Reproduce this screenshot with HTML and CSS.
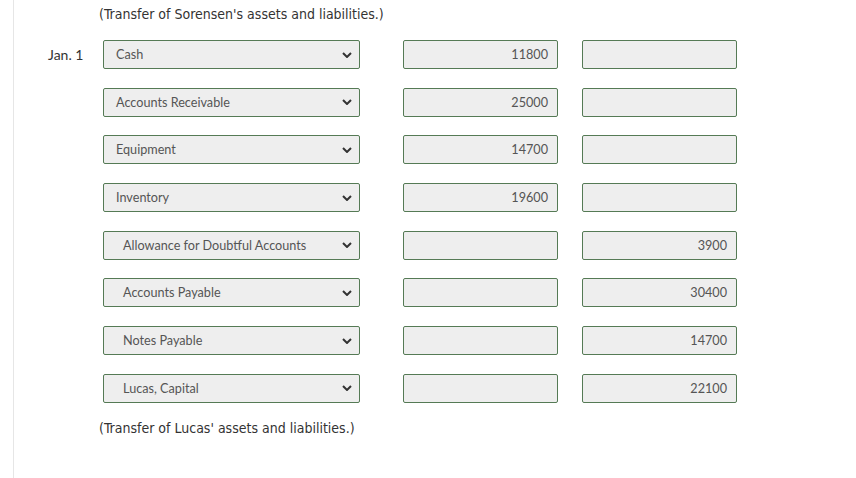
FILE: index.html
```html
<!DOCTYPE html>
<html>
<head>
<meta charset="utf-8">
<link rel="stylesheet" href="styles.css">
</head>
<body>
<div class="page">
  <p class="note note-top">(Transfer of Sorensen's assets and liabilities.)</p>
  <div class="rows">
    <div class="row">
      <div class="date">Jan. 1</div>
      <div class="sel"><span class="opt">Cash</span><svg class="chev" viewBox="0 0 10 6" width="10" height="6"><path d="M1 1 L5 5 L9 1" fill="none" stroke="#333" stroke-width="2"/></svg></div>
      <div class="amt">11800</div>
      <div class="amt"></div>
    </div>
    <div class="row">
      <div class="date"></div>
      <div class="sel"><span class="opt">Accounts Receivable</span><svg class="chev" viewBox="0 0 10 6" width="10" height="6"><path d="M1 1 L5 5 L9 1" fill="none" stroke="#333" stroke-width="2"/></svg></div>
      <div class="amt">25000</div>
      <div class="amt"></div>
    </div>
    <div class="row">
      <div class="date"></div>
      <div class="sel"><span class="opt">Equipment</span><svg class="chev" viewBox="0 0 10 6" width="10" height="6"><path d="M1 1 L5 5 L9 1" fill="none" stroke="#333" stroke-width="2"/></svg></div>
      <div class="amt">14700</div>
      <div class="amt"></div>
    </div>
    <div class="row">
      <div class="date"></div>
      <div class="sel"><span class="opt">Inventory</span><svg class="chev" viewBox="0 0 10 6" width="10" height="6"><path d="M1 1 L5 5 L9 1" fill="none" stroke="#333" stroke-width="2"/></svg></div>
      <div class="amt">19600</div>
      <div class="amt"></div>
    </div>
    <div class="row">
      <div class="date"></div>
      <div class="sel"><span class="opt indent">Allowance for Doubtful Accounts</span><svg class="chev" viewBox="0 0 10 6" width="10" height="6"><path d="M1 1 L5 5 L9 1" fill="none" stroke="#333" stroke-width="2"/></svg></div>
      <div class="amt"></div>
      <div class="amt">3900</div>
    </div>
    <div class="row">
      <div class="date"></div>
      <div class="sel"><span class="opt indent">Accounts Payable</span><svg class="chev" viewBox="0 0 10 6" width="10" height="6"><path d="M1 1 L5 5 L9 1" fill="none" stroke="#333" stroke-width="2"/></svg></div>
      <div class="amt"></div>
      <div class="amt">30400</div>
    </div>
    <div class="row">
      <div class="date"></div>
      <div class="sel"><span class="opt indent">Notes Payable</span><svg class="chev" viewBox="0 0 10 6" width="10" height="6"><path d="M1 1 L5 5 L9 1" fill="none" stroke="#333" stroke-width="2"/></svg></div>
      <div class="amt"></div>
      <div class="amt">14700</div>
    </div>
    <div class="row">
      <div class="date"></div>
      <div class="sel"><span class="opt indent">Lucas, Capital</span><svg class="chev" viewBox="0 0 10 6" width="10" height="6"><path d="M1 1 L5 5 L9 1" fill="none" stroke="#333" stroke-width="2"/></svg></div>
      <div class="amt"></div>
      <div class="amt">22100</div>
    </div>
  </div>
  <p class="note note-bottom">(Transfer of Lucas' assets and liabilities.)</p>
</div>
</body>
</html>
```

FILE: styles.css
```css
html, body {
  margin: 0;
  padding: 0;
  background: #fff;
}
.page {
  margin-left: 13px;
  border-left: 1px solid #e6e6e6;
  min-height: 478px;
  box-sizing: border-box;
  padding-top: 4px;
}
.note {
  margin: 0;
  padding-left: 85px;
  font-family: "DejaVu Sans Condensed", "DejaVu Sans", sans-serif;
  font-size: 14px;
  line-height: 20px;
  color: #333;
}
.note-top {
  margin-bottom: 16px;
}
.note-bottom {
  margin-top: 15px;
}
.rows {
  display: flex;
  flex-direction: column;
  gap: 18.7px;
}
.row {
  display: flex;
  align-items: center;
  height: 29px;
}
.date {
  width: 89px;
  box-sizing: border-box;
  padding-left: 34px;
  font-family: Lato, sans-serif;
  font-size: 14px;
  color: #333;
}
.sel {
  width: 257px;
  height: 29px;
  box-sizing: border-box;
  border: 1px solid #557a55;
  border-radius: 2px;
  background: #eeeeee;
  display: flex;
  align-items: center;
  justify-content: space-between;
  padding: 0 7px 0 12px;
  margin-right: 43px;
  font-family: Lato, sans-serif;
  font-size: 12.65px;
  color: #555;
}
.opt.indent {
  padding-left: 7px;
}
.chev {
  display: block;
}
.amt {
  width: 155px;
  height: 29px;
  box-sizing: border-box;
  border: 1px solid #557a55;
  border-radius: 2px;
  background: #eeeeee;
  margin-right: 24px;
  padding-right: 9px;
  text-align: right;
  font-family: Lato, sans-serif;
  font-size: 12.65px;
  line-height: 27px;
  color: #555;
}
```
